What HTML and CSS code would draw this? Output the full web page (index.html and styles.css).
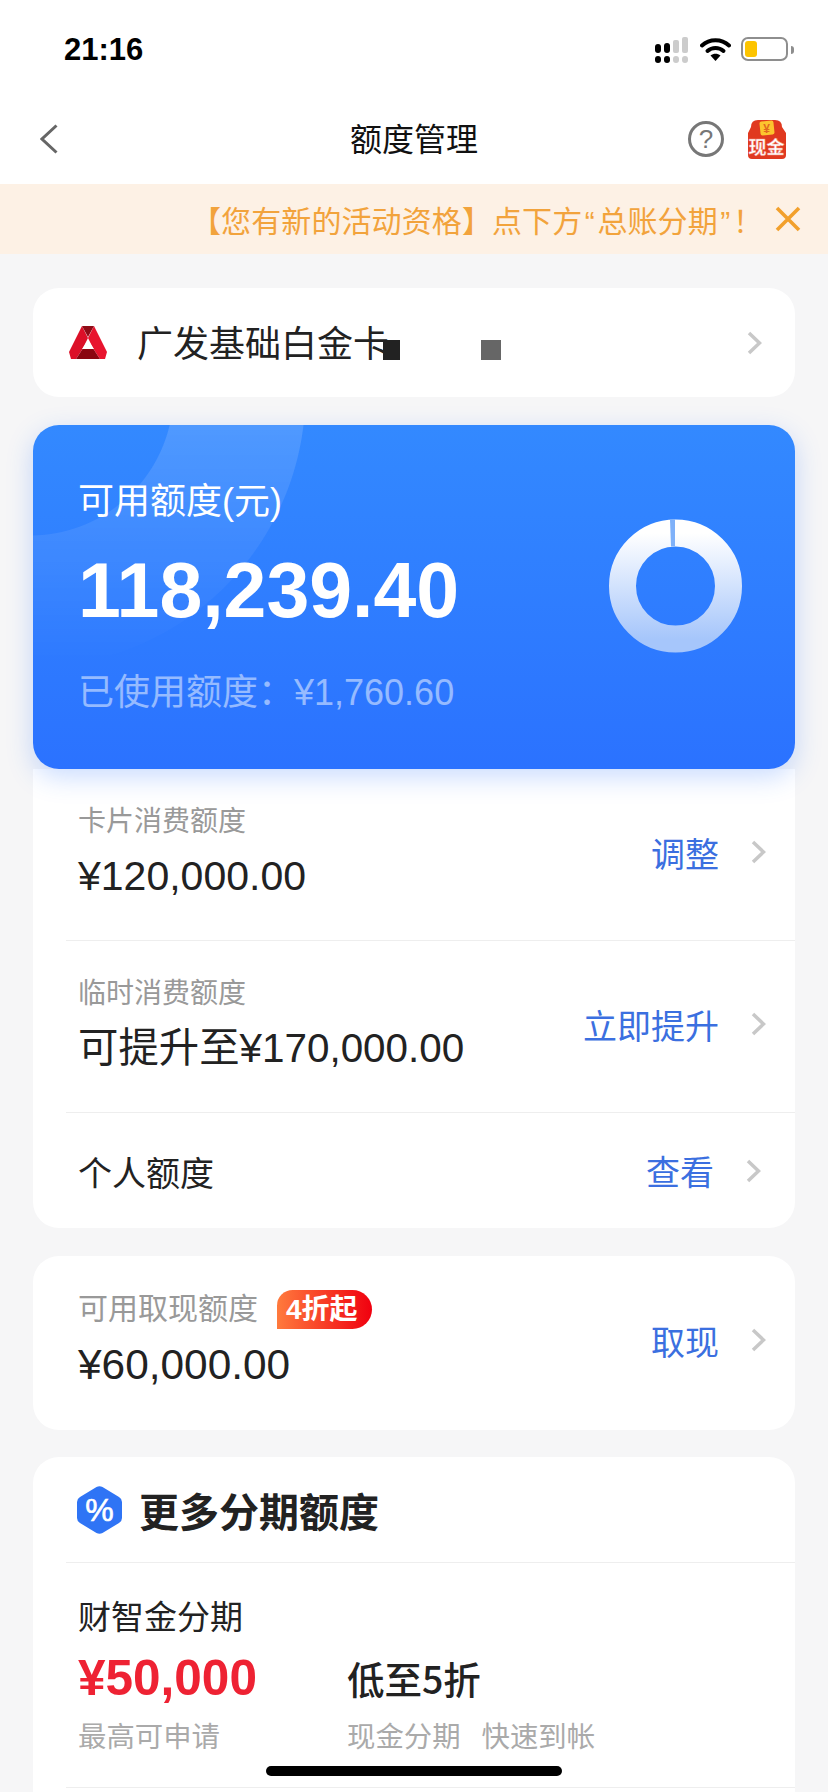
FILE: index.html
```html
<!DOCTYPE html>
<html lang="zh-CN">
  <head>
    <meta charset="UTF-8" />
    <meta name="viewport" content="width=device-width, initial-scale=1.0" />
    <title>额度管理</title>
    <link rel="stylesheet" href="styles.css">
  </head>
  <body>
    <div class="status-bar">
      <span class="clock">21:16</span>
      <div class="status-icons">
        <svg class="signal" width="33" height="26" viewBox="0 0 33 26">
          <rect x="0" y="7" width="6" height="9" rx="3" fill="#000" />
          <rect x="9" y="6" width="6" height="10" rx="3" fill="#000" />
          <rect x="18" y="3" width="6" height="13" rx="2" fill="#ccc" />
          <rect x="27" y="0" width="6" height="16" rx="2" fill="#ccc" />
          <rect x="0" y="19" width="6" height="7" rx="3" fill="#000" />
          <rect x="9" y="19" width="6" height="7" rx="3" fill="#000" />
          <rect x="18" y="19" width="6" height="7" rx="3" fill="#ccc" />
          <rect x="27" y="19" width="6" height="7" rx="3" fill="#ccc" />
        </svg>
        <svg class="wifi" width="31" height="24" viewBox="0 0 31 24">
          <path d="M2 8.5C9.5 1.5 21.5 1.5 29 8.5" fill="none" stroke="#000" stroke-width="4" stroke-linecap="round" />
          <path d="M7.5 14C12 10 19 10 23.5 14" fill="none" stroke="#000" stroke-width="4" stroke-linecap="round" />
          <path d="M15.5 24L10.5 18.5C13.5 16 17.5 16 20.5 18.5Z" fill="#000" />
        </svg>
        <div class="battery"><div class="battery-level"></div></div>
        <div class="battery-nub"></div>
      </div>
    </div>

    <header class="nav">
      <svg class="back" width="18" height="30" viewBox="0 0 18 30">
        <polyline points="16.5,1.5 2,15 16.5,28.5" fill="none" stroke="#666" stroke-width="3" />
      </svg>
      <h1>额度管理</h1>
      <div class="nav-icons">
        <span class="help">?</span>
        <svg class="cash" width="39" height="39" viewBox="0 0 39 39">
          <path d="M4 7Q4 0 11 0H28Q35 0 35 7L39 13V35Q39 39 35 39H5Q1 39 1 35V13Z" fill="#e0391f" />
          <rect x="13" y="1" width="14" height="14" rx="2" fill="#fcc52e" transform="rotate(-6 20 8)" />
          <text x="19.5" y="13" class="cash-yen">¥</text>
          <text x="19.5" y="34" class="cash-text">现金</text>
        </svg>
      </div>
    </header>

    <div class="notice">
      <span class="notice-text">【您有新的活动资格】点下方<span class="quote">“</span>总账分期<span class="quote">”</span>！</span>
      <svg width="26" height="26" viewBox="0 0 26 26">
        <path d="M2 2L24 24M24 2L2 24" fill="none" stroke="#f2a02c" stroke-width="3.6" />
      </svg>
    </div>

    <main class="content">
      <section class="card card-name">
        <svg class="bank-logo" width="38" height="34" viewBox="0 0 38 34">
          <polygon points="13,0 19,12 13.5,23 7,33 2,33 0,26" fill="#dc1028" />
          <polygon points="25,0 38,26 36,33 31,33 24.5,23 19,12" fill="#e8142e" />
          <polygon points="13,0 25,0 19,11" fill="#8f0b16" />
          <polygon points="13.5,23 24.5,23 31,33 7,33" fill="#8a0510" />
          <polygon points="19,14 25,23 13,23" fill="#fff" />
        </svg>
        <span class="card-title">广发基础白金卡</span>
        <span class="mask mask-dark"></span>
        <span class="mask mask-grey"></span>
        <svg class="chevron" width="15" height="24" viewBox="0 0 15 24">
          <polyline points="2,2 12.5,12 2,22" fill="none" stroke="#c8c8c8" stroke-width="3.5" />
        </svg>
      </section>

      <section class="hero">
        <div class="hero-text">
          <div class="hero-label">可用额度(元)</div>
          <div class="hero-amount">118,239.40</div>
          <div class="hero-used">已使用额度：¥1,760.60</div>
        </div>
        <svg class="donut" width="133" height="134" viewBox="0 0 133 134">
          <defs>
            <linearGradient id="ring" x1="0" y1="0" x2="0" y2="1">
              <stop offset="0" stop-color="#fff" />
              <stop offset="1" stop-color="#a6c6fb" />
            </linearGradient>
          </defs>
          <circle cx="66.5" cy="67" r="53" fill="none" stroke="url(#ring)" stroke-width="27" />
          <polygon points="61,0.5 66,0.5 66,27.5 62,27.5" fill="#7fb1f9" />
        </svg>
      </section>

      <section class="card card-limits">
        <div class="row">
          <div class="row-text">
            <div class="label">卡片消费额度</div>
            <div class="value">¥120,000.00</div>
          </div>
          <span class="action">调整</span>
          <svg class="chevron" width="15" height="24" viewBox="0 0 15 24">
            <polyline points="2,2 12.5,12 2,22" fill="none" stroke="#c8c8c8" stroke-width="3.5" />
          </svg>
        </div>
        <div class="row">
          <div class="row-text">
            <div class="label">临时消费额度</div>
            <div class="value value-long">可提升至¥170,000.00</div>
          </div>
          <span class="action">立即提升</span>
          <svg class="chevron" width="15" height="24" viewBox="0 0 15 24">
            <polyline points="2,2 12.5,12 2,22" fill="none" stroke="#c8c8c8" stroke-width="3.5" />
          </svg>
        </div>
        <div class="row row-short">
          <div class="row-text">
            <div class="value value-small">个人额度</div>
          </div>
          <span class="action">查看</span>
          <svg class="chevron" width="15" height="24" viewBox="0 0 15 24">
            <polyline points="2,2 12.5,12 2,22" fill="none" stroke="#c8c8c8" stroke-width="3.5" />
          </svg>
        </div>
      </section>

      <section class="card card-cash">
        <div class="row-text">
          <div class="label-line">
            <span class="label label-big">可用取现额度</span>
            <span class="badge">4折起</span>
          </div>
          <div class="value">¥60,000.00</div>
        </div>
        <span class="action">取现</span>
        <svg class="chevron" width="15" height="24" viewBox="0 0 15 24">
          <polyline points="2,2 12.5,12 2,22" fill="none" stroke="#c8c8c8" stroke-width="3.5" />
        </svg>
      </section>

      <section class="card card-more">
        <div class="more-head">
          <svg width="45" height="48" viewBox="0 0 45 48">
            <path d="M19.5 1Q22.5 -0.5 25.5 1L42 11Q45 12.8 45 16V32Q45 35.2 42 37L25.5 47Q22.5 48.5 19.5 47L3 37Q0 35.2 0 32V16Q0 12.8 3 11Z" fill="#2f74f5" />
            <text x="22.5" y="35" class="percent">%</text>
          </svg>
          <h2>更多分期额度</h2>
        </div>
        <div class="plan">
          <div class="plan-name">财智金分期</div>
          <div class="plan-grid">
            <div class="plan-amount">¥50,000</div>
            <div class="plan-rate">低至5折</div>
            <div class="plan-note">最高可申请</div>
            <div class="plan-note plan-tags"><span>现金分期</span><span>快速到帐</span></div>
          </div>
        </div>
      </section>
    </main>

    <div class="home-bar"></div>
  </body>
</html>
```

FILE: styles.css
```css
html,
body {
  height: 1792px;
  overflow: hidden;
}

body {
  margin: 0;
  position: relative;
  background-color: #f6f6f7;
  color: #222;
  font-family: "Liberation Sans", "Noto Sans CJK SC", sans-serif;
}

/* 状态栏 */
.status-bar {
  height: 100px;
  background-color: #fff;
  display: flex;
  justify-content: space-between;
  padding: 0 34px 0 64px;
  box-sizing: border-box;
}
.clock {
  font-size: 31px;
  font-weight: 700;
  line-height: 100px;
  color: #000;
}
.status-icons {
  display: flex;
  align-items: flex-start;
  padding-top: 37px;
}
.wifi {
  margin-left: 12px;
}
.battery {
  width: 47px;
  height: 24px;
  margin-left: 10px;
  border: 2px solid #8e8e8e;
  border-radius: 7px;
  box-sizing: border-box;
  padding: 2px;
}
.battery-level {
  width: 12px;
  height: 16px;
  background-color: #fdc400;
  border-radius: 3px;
}
.battery-nub {
  width: 3px;
  height: 8px;
  margin: 9px 0 0 3px;
  background-color: #8e8e8e;
  border-radius: 0 3px 3px 0;
}

/* 导航 */
.nav {
  height: 84px;
  background-color: #fff;
  display: flex;
  align-items: center;
  justify-content: space-between;
  padding: 0 42px 0 40px;
  position: relative;
}
.back {
  margin-bottom: 6px;
}
.nav h1 {
  position: absolute;
  left: 0;
  right: 0;
  top: 18px;
  margin: 0;
  text-align: center;
  font-size: 32px;
  line-height: 44px;
  font-weight: 400;
  color: #111;
}
.nav-icons {
  display: flex;
  align-items: center;
  gap: 23px;
  margin-bottom: 6px;
}
.help {
  width: 36px;
  height: 36px;
  box-sizing: border-box;
  border: 3px solid #777;
  border-radius: 50%;
  color: #777;
  font-size: 26px;
  line-height: 30px;
  text-align: center;
}
.cash-yen {
  font-size: 12px;
  font-weight: 700;
  fill: #e0691f;
  text-anchor: middle;
}
.cash-text {
  font-size: 18px;
  font-weight: 700;
  fill: #fff;
  stroke: #f08a78;
  stroke-width: 0.4px;
  text-anchor: middle;
}

/* 提示条 */
.notice {
  height: 70px;
  background-color: #fdf1e5;
  display: flex;
  align-items: center;
  justify-content: flex-end;
  padding-right: 27px;
}
.notice-text {
  font-size: 30px;
  letter-spacing: 0.1px;
  color: #f2a33c;
  margin-right: 12px;
}
.quote {
  margin: 0 2.5px;
}

.content {
  padding: 34px 33px 0;
}

.card {
  background-color: #fff;
  border-radius: 26px;
}

.card-name {
  height: 109px;
  display: flex;
  align-items: center;
  padding: 0 33px 0 36px;
  margin-bottom: 28px;
}
.card-title {
  font-size: 36px;
  margin: 0 0 3px 30px;
}
.mask {
  height: 20px;
  align-self: flex-start;
  margin-top: 52px;
}
.mask-dark {
  width: 17px;
  margin-left: -6px;
  background-color: #222;
}
.mask-grey {
  width: 20px;
  margin-left: 81px;
  background-color: #666;
}
.card-name .chevron {
  margin-left: auto;
}

/* 蓝色额度卡 */
.hero {
  position: relative;
  z-index: 1;
  height: 344px;
  box-sizing: border-box;
  border-radius: 26px;
  overflow: hidden;
  display: flex;
  justify-content: space-between;
  align-items: center;
  padding: 0 53px 0 45px;
  color: #fff;
  background: linear-gradient(180deg, #3389ff, #2b72ff);
  box-shadow: 0 8px 26px rgba(43, 114, 255, 0.25);
}
.hero::before {
  content: "";
  position: absolute;
  inset: 0;
  background: radial-gradient(circle at -3px -33px, transparent 143px, rgba(255, 255, 255, 0.14) 144px, rgba(255, 255, 255, 0.14) 275px, transparent 276px);
  -webkit-mask-image: linear-gradient(180deg, #000, transparent 240px);
  mask-image: linear-gradient(180deg, #000, transparent 240px);
}
.hero-text {
  position: relative;
  align-self: flex-start;
  padding-top: 52px;
}
.hero-label {
  font-size: 36px;
  line-height: 50px;
}
.hero-amount {
  font-size: 77px;
  line-height: 90px;
  font-weight: 700;
  margin-top: 18px;
}
.hero-used {
  font-size: 36px;
  line-height: 50px;
  margin-top: 33px;
  color: rgba(255, 255, 255, 0.5);
}
.donut {
  position: relative;
  margin-bottom: 22px;
}

/* 额度列表 */
.card-limits {
  border-radius: 0 0 26px 26px;
  margin-bottom: 28px;
}
.row {
  height: 172px;
  box-sizing: border-box;
  margin-left: 33px;
  padding: 0 29px 5px 12px;
  display: flex;
  align-items: center;
  border-bottom: 1px solid #eee;
}
.row-short {
  height: 115px;
  border-bottom: none;
  padding-bottom: 0;
  padding-right: 34px;
}
.row-text {
  flex: 1;
}
.label {
  font-size: 28px;
  line-height: 40px;
  color: #999;
}
.label-big {
  font-size: 30px;
}
.value {
  font-size: 41px;
  line-height: 52px;
  margin-top: 8px;
}
.value-long {
  font-size: 40.4px;
}
.value-small {
  font-size: 34px;
  margin-top: 6px;
}
.action {
  font-size: 34px;
  color: #3b6fe0;
  margin-right: 32px;
}

.card-cash {
  height: 174px;
  box-sizing: border-box;
  display: flex;
  align-items: center;
  padding: 0 29px 6px 45px;
  margin-bottom: 27px;
}
.card-cash .value {
  font-size: 42.4px;
  margin-top: 10px;
}
.label-line {
  display: flex;
  align-items: center;
  gap: 19px;
}
.badge {
  width: 95px;
  height: 39px;
  box-sizing: border-box;
  padding-left: 9px;
  color: #fff;
  font-size: 28px;
  font-weight: 700;
  line-height: 39px;
  border-radius: 16px 20px 20px 0;
  background: linear-gradient(90deg, #ff7a3d, #f0000f);
}

/* 更多分期 */
.card-more {
  padding-bottom: 60px;
}
.more-head {
  height: 106px;
  box-sizing: border-box;
  margin-left: 33px;
  padding-left: 11px;
  display: flex;
  align-items: center;
  gap: 17px;
  border-bottom: 1px solid #eee;
}
.more-head h2 {
  margin: 0;
  font-size: 40px;
  font-weight: 700;
}
.percent {
  font-size: 32px;
  font-weight: 400;
  fill: #fff;
  stroke: #fff;
  stroke-width: 0.6px;
  text-anchor: middle;
}
.plan {
  margin-left: 33px;
  padding: 33px 0 30px 12px;
  border-bottom: 1px solid #eee;
}
.plan-name {
  font-size: 33px;
  line-height: 44px;
}
.plan-grid {
  display: grid;
  grid-template-columns: 269px auto;
  margin-top: 8px;
}
.plan-amount {
  font-size: 49.5px;
  line-height: 60px;
  font-weight: 700;
  color: #ee2233;
}
.plan-rate {
  font-family: "Noto Sans CJK SC", sans-serif;
  font-size: 37.5px;
  line-height: 60px;
  font-weight: 500;
}
.plan-note {
  font-size: 28.4px;
  line-height: 40px;
  margin-top: 9px;
  color: #aaa;
}
.plan-tags {
  display: flex;
  gap: 21px;
}

.home-bar {
  position: absolute;
  left: 266px;
  top: 1766px;
  width: 296px;
  height: 10px;
  border-radius: 5px;
  background-color: #000;
}
```
